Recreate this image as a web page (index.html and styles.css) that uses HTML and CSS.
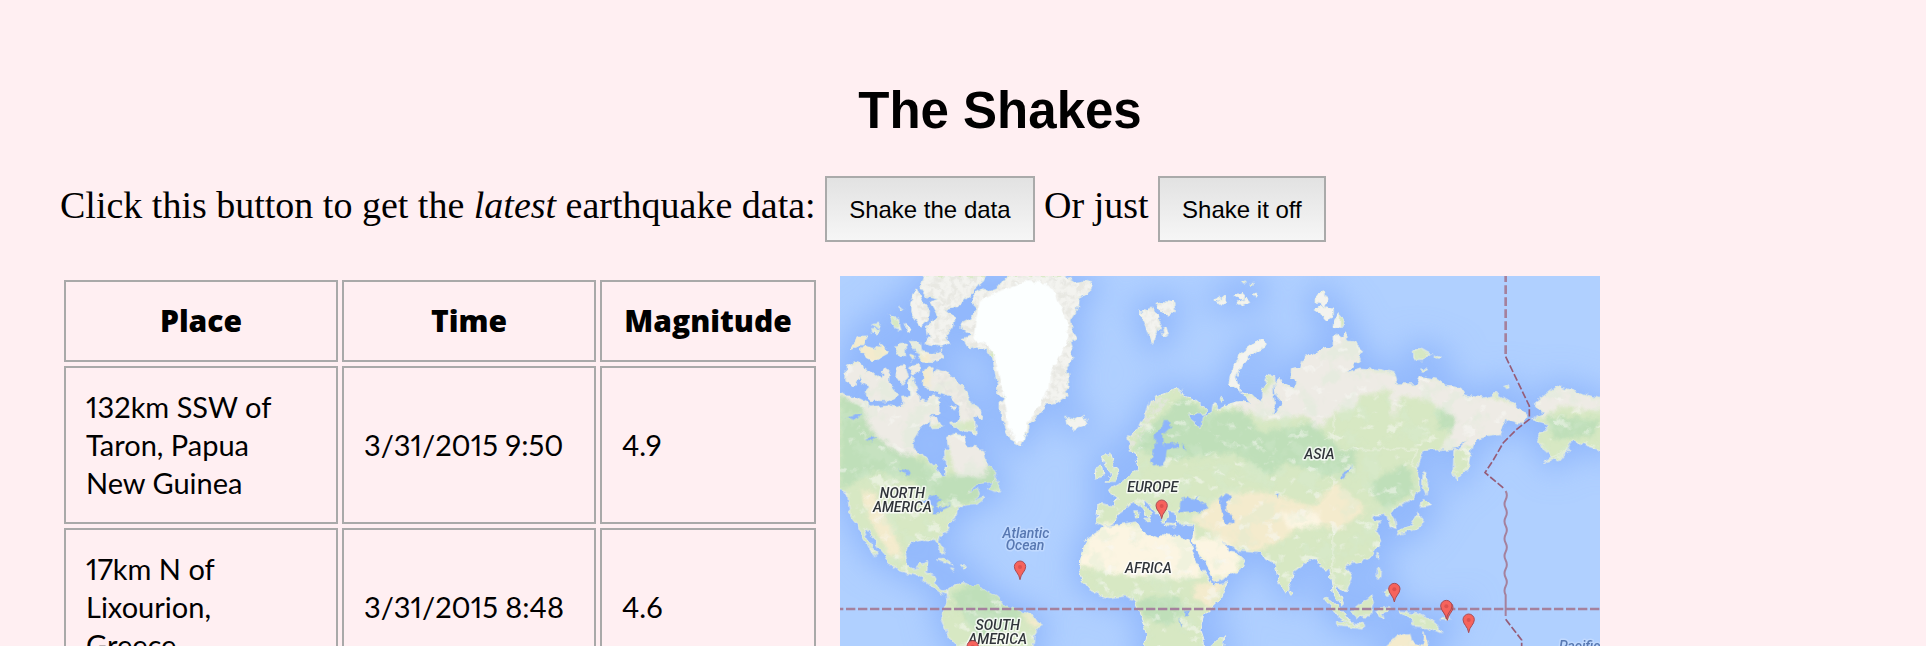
FILE: index.html
```html
<!DOCTYPE html>
<html lang="en">
<head>
<meta charset="utf-8">
<title>The Shakes</title>
<link rel="stylesheet" href="styles.css">
</head>
<body>
<h1 class="title">The Shakes</h1>
<p class="intro">Click this button to get the <em>latest</em> earthquake data: <button class="btn" type="button">Shake the data</button> Or just <button class="btn" type="button">Shake it off</button></p>
<main class="content">
<table class="quakes">
<thead>
<tr><th class="place" scope="col">Place</th><th class="time" scope="col">Time</th><th class="magnitude" scope="col">Magnitude</th></tr>
</thead>
<tbody>
<tr><td>132km SSW of Taron, Papua New Guinea</td><td>3/31/2015 9:50</td><td>4.9</td></tr>
<tr><td>17km N of Lixourion, Greece</td><td>3/31/2015 8:48</td><td>4.6</td></tr>
</tbody>
</table>
<svg class="map" viewBox="0 0 2280 1230" role="img" aria-label="World map of earthquakes">
<defs>
<filter id="coast" x="0" y="0" width="2280" height="1230" filterUnits="userSpaceOnUse">
<feTurbulence type="fractalNoise" baseFrequency="0.045" numOctaves="2" seed="4" result="n"/>
<feDisplacementMap in="SourceGraphic" in2="n" scale="22" xChannelSelector="R" yChannelSelector="G"/>
</filter>
<filter id="glow" x="-100" y="-100" width="2480" height="1430" filterUnits="userSpaceOnUse"><feGaussianBlur stdDeviation="44"/></filter>
<filter id="soft" x="-100" y="-100" width="2480" height="1430" filterUnits="userSpaceOnUse"><feGaussianBlur stdDeviation="7"/></filter>
<filter id="mottle" x="0" y="0" width="2280" height="1230" filterUnits="userSpaceOnUse">
<feTurbulence type="fractalNoise" baseFrequency="0.016" numOctaves="4" seed="9"/>
<feColorMatrix values="0 0 0 0 .67  0 0 0 0 .84  0 0 0 0 .65  6 0 0 0 -3.1"/>
</filter>
<filter id="ridges" x="0" y="0" width="2280" height="1230" filterUnits="userSpaceOnUse">
<feTurbulence type="fractalNoise" baseFrequency="0.022 0.03" numOctaves="4" seed="22"/>
<feColorMatrix values="0 0 0 0 .95  0 0 0 0 .95  0 0 0 0 .92  0 8 0 0 -5"/>
</filter>
<filter id="rocks" x="0" y="0" width="2280" height="1230" filterUnits="userSpaceOnUse">
<feTurbulence type="fractalNoise" baseFrequency="0.06" numOctaves="3" seed="2"/>
<feColorMatrix values="0 0 0 0 .78  0 0 0 0 .78  0 0 0 0 .74  5 0 0 0 -2.3"/>
</filter>
<clipPath id="rockArea"><path d="M210 0H780V380L650 440 560 530 500 510 480 360 400 350 410 450 290 320ZM880 60H1020V210H880ZM860 400 940 340 1010 340 960 400 900 500 850 540Z"/></clipPath>
<g id="land">
<g transform="translate(-30 -18)">
<path d="M10 355 45 378 75 380 115 400 115 412 170 405 200 412 218 403 235 395 240 375 235 340 247 320 262 355 265 390 290 398 305 375 327 380 326 430 302 430 300 450 268 478 248 510 250 545 262 600H10Z"/>
<path d="M345 600 360 545 350 502 375 492 400 500 412 530 435 530 457 550 460 600Z"/>
<path d="M270 50 285 8H470L445 52 400 90 382 115 352 120 374 152 368 172 345 198 356 220 330 232 285 220 300 200 292 165 325 140 300 95 330 88 292 80Z"/>
<path d="M240 95 260 58 276 90 298 122 295 150 272 172 240 130Z"/>
<path d="M425 98 436 70 462 55 475 66 500 58 520 30 540 8H690L735 38 760 34 786 40 780 66 745 85 740 120 722 150 726 185 742 206 718 215 732 260 710 290 717 350 700 370 712 376 682 396 648 402 620 438 594 460 590 492 575 528 545 512 530 480 514 440 514 400 527 385 504 374 503 345 498 318 490 270 470 240 440 230 418 236 400 206 428 196 390 175 396 158 430 140 440 112Z"/>
<path d="M178 138 205 148 213 180 196 176ZM225 158 245 178 235 185ZM128 165 150 160 145 172ZM126 180 145 178 143 194 128 192ZM65 235 85 200 108 198 98 224ZM90 240 105 228 130 235 148 238 150 222 162 235 175 248 150 262 130 275 112 265ZM195 228 225 222 226 260 212 258ZM238 215 270 215 275 245 310 252 330 240 342 262 325 275 275 272 262 250ZM240 250 252 255 248 270Z"/>
<path d="M50 285 80 275 112 300 90 320 70 348 48 330ZM95 312 120 303 152 330 165 290 180 310 178 340 204 378 170 392 120 390 103 372 120 352 92 338ZM202 292 225 290 234 320 216 342 198 320ZM240 290 268 285 268 305 248 316ZM218 382 238 380 236 400 222 402Z"/>
<path d="M280 345 282 300 302 290 312 320 320 293 345 300 377 338 402 358 418 378 425 400 458 425 456 450 430 438 442 492 402 482 356 458 395 450 388 412 360 375 320 365Z"/>
<path d="M303 443 320 445 338 474 300 476ZM358 405 372 405 370 420ZM210 108 220 115 214 122Z"/>
<path d="M708 442 735 450 755 436 771 450 765 468 735 480 712 462Z"/>
</g>
<g transform="translate(-30 540)">
<path d="M10-20H255L300 20 325 42 330 62 347 62 348 40 344-20H460L470 30 497 50 490 76 440 84 408 112 442 98 448 114 430 134 466 122 440 142 400 148 380 168 375 190 357 202 352 225 330 240 326 255 341 280 333 292 320 254 290 250 265 250 235 262 226 290 232 330 255 340 270 325 293 317 285 350 315 360 320 388 336 404 352 404 350 414 328 408 300 388 270 362 250 355 215 346 180 325 165 292 145 270 125 240 112 215 100 215 115 255 144 296 135 302 115 272 95 238 80 208 60 182 54 120 45 105 10 85Z"/>
<path d="M476 98 495 72 512 104 495 106ZM322 308 345 308 372 326 350 320ZM388 330 410 330 400 340ZM362 336 375 338 368 342Z"/>
<path d="M358 396 400 380 450 395 500 420 525 450 570 465 620 485 633 505 612 540 603 620 600 700H420L385 575 362 550 347 520 333 490 335 468 354 440 352 415Z"/>
</g>
<g transform="translate(720 -18)">
<path d="M143 500 180 470 205 420 215 390 250 370 300 355 305 375 345 388 377 415 375 432 325 430 345 465 366 470 372 440 396 430 400 398 412 420 440 403 480 395 512 400 480 362 520 378 547 398 550 350 563 315 581 320 582 380 586 402 576 432 607 410 602 390 591 378 586 340 600 325 612 345 642 355 648 338 633 320 635 298 665 295 675 260 720 240 770 218 800 190V610H190L188 535 152 545Z"/>
<path d="M545 211 558 218 545 237 510 252 486 285 470 320 478 358 447 345 453 310 465 285 480 252 510 228Z"/>
<path d="M180 125 203 128 217 110 232 145 243 156 228 195 217 220 205 190 196 165ZM228 100 245 95 280 98 285 120 262 138 245 125ZM246 175 258 172 264 195 250 196Z"/>
<path d="M412 96 435 76 440 90 422 106ZM465 78 488 70 486 88ZM475 98 500 85 510 96 485 104ZM520 70 533 66 530 82ZM406 84H414V92H406ZM486 36H494V42H486ZM514 40H522V46H514Z"/>
<path d="M712 75 730 62 743 85 735 106 712 100ZM703 120 725 108 757 115 757 140 735 152 720 130ZM763 155 778 132 792 150 782 175 760 172ZM424 382 434 388 426 395Z"/>
</g>
<g transform="translate(1500 -18)">
<path d="M-20 190 20 212 45 218 67 240 60 265 15 310 60 295 130 300 165 310 172 345 230 345 240 320 290 328 320 350 360 353 372 375 430 385 470 373 520 400 562 440 540 460 500 445 482 490 420 500 395 525 382 600H345L358 535 390 500 340 535 250 542 228 600H-20Z"/>
<path d="M220 240 245 235 272 250 250 268 222 268ZM280 255 302 262 292 268ZM242 294 260 298 250 304ZM488 350 508 342 510 350 496 356Z"/>
<path d="M585 400 650 348 720 370 800 392V545L700 513 680 540 652 575 612 542 590 490 625 482 618 460 578 446 610 432Z"/>
</g>
<g transform="translate(720 540)">
<path d="M165-20 167 5 178 30 175 42 148 62 108 90 85 103 112 125 105 150 54 143 50 200 72 210 105 200 130 157 165 140 190 160 205 190 219 172 195 150 190 132 205 140 235 175 255 200 267 165 285 170 290 205 342 205 335 255 352 285 387 345 402 377 480 342 494 312 470 290 447 285 428 255 480 285 545 290 557 310 575 315 585 330 600 385 615 408 630 385 637 350 682 315 705 310 725 330 750 345 760 415 785 450 790 440 765 390 800 400V-20Z"/>
<path d="M20 250 60 225 75 212 170 198 180 225 235 250 250 235 310 245 328 255 345 310 385 370 397 387 442 380 420 430 370 480 360 520 373 560 370 700H200L190 590 200 540 185 490 165 435 135 420 75 425 30 400 6 370 0 350 2 310Z"/>
<path d="M385 620 388 575 410 555 434 542 425 620Z"/>
<path d="M70 5 90-12 102 30 118 60 110 76 78 76 95 55 77 30ZM46 40 65 24 72 55 48 70ZM192 190 212 190 205 200ZM162 165 174 165 172 182 163 182ZM626 400 640 410 634 420ZM258 204 285 206 282 212 262 210Z"/>
<path d="M730 425 752 432 800 480 812 505 780 485Z"/>
</g>
<g transform="translate(1500 540)">
<path d="M-20-20H235L215 20 235 50 242 98 215 130 180 150 150 168 165 190 168 220 150 212 145 185 135 175 100 178 100 195 125 195 105 222 122 250 115 270 80 310 40 320 20 330 36 360 20 400-20 380Z"/>
<path d="M342-20H385V10L375 40 348 70 340 45ZM250 44 263 80 258 118 248 85ZM250 130 272 148 243 154ZM235 168 250 185 242 215 190 234 172 240 178 225 215 205ZM112 340 124 340 122 365 112 370ZM130 402 150 395 148 418 134 415ZM108 292 116 298 112 310Z"/>
<path d="M38 465 60 445 95 415 100 440 87 482 50 482ZM110 462 130 452 152 458 125 468 132 490 116 485ZM178 465 215 470 250 480 290 505 302 530 260 512 220 510 212 490ZM125 620 135 570 160 548 210 535 215 560 247 572 252 530 265 560 278 620ZM-10 495 70 505 70 516-10 505ZM610 20 640 0 690-20 650 6ZM300 494 330 482 320 495Z"/>
</g>
</g>
<mask id="landMask" maskUnits="userSpaceOnUse" x="-50" y="-50" width="2400" height="1350"><use href="#land" fill="#fff"/></mask>
<g id="pin"><path d="M0 0C-2-18-17-25-17-39A17 17 0 0 1 17-39C17-25 2-18 0 0Z" fill="#f6635c" stroke="#a84b55" stroke-width="3"/><circle cy="-38" r="6" fill="#de514e"/></g>
</defs>
<rect class="sea" width="2280" height="1230"/>
<use href="#land" class="shelf" filter="url(#glow)"/>
<g filter="url(#coast)">
<use href="#land" fill="#d7e8c3" stroke="#edf1e3" stroke-width="3"/>
<g mask="url(#landMask)">
<g filter="url(#soft)">
<path class="forest" d="M0 340 80 390 130 470 220 540 330 600 460 560 480 630 410 680 290 690 220 610 100 590 0 640ZM330 960 420 900 560 1000 520 1060 420 1090ZM900 480 1030 360 1100 410 1210 400 1260 470 1420 440 1500 520 1440 590 1340 560 1290 600 1180 530 1000 550 880 520ZM1420 530 1550 520 1540 590 1440 600ZM890 970 1010 960 1040 1010 980 1050 910 1020ZM1590 620 1700 560 1730 640 1640 700 1600 660ZM1790 400 1850 400 1870 470 1800 460ZM2120 420 2280 430 2260 480 2140 490Z"/>
<path class="tundra" d="M0 150 350 200 440 430 260 450 230 540 170 530 90 460 70 390 0 360ZM310 470H440V600H350ZM1160 380 1280 350 1350 200 1560 160 1580 280 1720 290 2080 400 2040 500 1900 510 1800 530 1850 430 1760 370 1680 360 1660 440 1650 340 1560 360 1540 400 1500 400 1430 460 1400 420 1270 430ZM2080 370 2160 320 2290 370V410L2160 390 2110 430Z"/>
<path class="arid" d="M30 180H170V260H30ZM200 230H270V330H240V260H200ZM60 640 100 650 160 760 190 850 150 840 90 730ZM1160 650 1280 650 1420 690 1490 620 1580 700 1500 760 1400 740 1330 790 1240 830 1160 800 1050 730ZM1060 930 1160 910 1120 1000 1060 960ZM540 1010 610 1030 590 1060ZM1630 1070H1780V1200H1630Z"/>
<path class="desert" d="M700 860 750 770 800 740 1060 760 1090 900 1000 910 800 890ZM1060 790 1140 780 1210 840 1180 900 1110 910ZM1320 710 1440 710 1440 750 1350 760Z"/>
</g>
<rect width="2280" height="1230" filter="url(#mottle)" opacity=".3"/>
<rect width="2280" height="1230" filter="url(#ridges)" opacity=".5"/>
<path fill="#f3f3ef" d="M200 0H800V520H460V220H300L200 160ZM870 50H1500V200H1290L1220 350H1140V220H870ZM660 400H760V480H660Z"/>
<g clip-path="url(#rockArea)"><rect width="2280" height="1230" filter="url(#rocks)" opacity=".8"/></g>
<path fill="#fcffff" d="M420 70 480 45 550 15 620 20 650 60 670 110 685 150 680 200 655 250 630 290 625 340 595 400 560 440 555 490 530 500 505 450 500 400 480 320 465 240 440 205 400 190 410 120Z"/>
</g>
<g class="inland">
<path d="M970 432 992 432 990 455 970 475 971 507 1015 501 1016 513 980 522 976 552 967 565 940 572 930 555 946 510 944 475 962 455Z"/>
<path d="M1018 698 1025 665 1045 660 1060 675 1082 652 1072 670 1098 690 1096 704 1060 706 1015 708ZM1136 670 1155 652 1176 660 1160 680 1162 705 1181 720 1180 742 1150 738 1145 705ZM235 675 280 660 310 672 290 682 298 712 280 712 278 684ZM285 704 330 686 330 692 290 710ZM175 580 210 582 200 600ZM20 425 65 410 45 432ZM75 488 110 480 95 495ZM1036 1002 1050 1000 1046 1018 1034 1015ZM1018 1025 1028 1048 1024 1055ZM1500 605 1535 570 1530 585 1508 610ZM1310 655 1320 652 1315 668ZM1030 500 1042 525 1028 515Z"/>
</g>
</g>
<g class="borders">
<path stroke-dasharray="28 8" d="M-18 999H2280"/>
<path stroke-dasharray="26 10" d="M1997-8V242"/>
<path class="thin" d="M1997 242 2068 390V430L2030 460 1990 500 1960 552 1935 590 1995 640"/>
<path class="wave" d="M1997 645q7 13 0 26t0 26t0 26t0 26t0 26t0 26t0 26t0 26t0 26t0 26t0 26t0 26V1020"/>
<path class="thin" d="M1997 1030 2045 1092V1230"/>
</g>
<g class="labels">
<text x="187" y="667">NORTH</text><text x="187" y="708">AMERICA</text>
<text x="473" y="1063">SOUTH</text><text x="473" y="1105">AMERICA</text>
<text x="938" y="649">EUROPE</text><text x="925" y="890">AFRICA</text><text x="1438" y="549">ASIA</text>
<g class="ocean"><text x="558" y="786">Atlantic</text><text x="555" y="822">Ocean</text><text x="2219" y="1126">Pacific</text></g>
</g>
<use href="#pin" x="540" y="911"/><use href="#pin" x="965" y="728"/><use href="#pin" x="1663" y="978"/><use href="#pin" x="1822" y="1033"/><use href="#pin" x="1819" y="1029"/><use href="#pin" x="1886" y="1070"/><use href="#pin" x="398" y="1150"/>
</svg>
</main>
</body>
</html>
```
FILE: styles.css
```css
* { box-sizing: border-box; }

body {
  margin: 0;
  padding: 81px 0 0 60px;
  background: #ffeff2;
  color: #000;
}

.title {
  margin: 0;
  padding-left: 14px;
  font: bold 51px/60px "Liberation Sans", Arial, sans-serif;
  text-align: center;
}

.intro {
  margin: 35px 0 34px;
  font: 38px/40px Georgia, "Liberation Serif", serif;
}

.btn {
  height: 66px;
  padding: 2px 22px 0;
  border: 2px solid #aaa;
  border-radius: 0;
  background: linear-gradient(#e2e2e2, #f6f6f6);
  color: #000;
  font: 24px/28px "Liberation Sans", Arial, sans-serif;
}

.content {
  display: flex;
  align-items: flex-start;
  gap: 20px;
}

.quakes {
  flex: 0 1 760px;
  table-layout: fixed;
  border-collapse: separate;
  border-spacing: 4px;
  font: 29px/38px "Gill Sans", Lato, sans-serif;
  font-variant-numeric: proportional-nums;
}

.quakes th,
.quakes td {
  padding: 20px;
  border: 2px solid #a9a9a9;
  text-align: left;
}

.quakes td:first-child { padding-right: 40px; }

.quakes th {
  font: 800 30px/38px "Open Sans", sans-serif;
  text-align: center;
}

.place { width: 274px; }
.time { width: 254px; }
.magnitude { width: 216px; }

.map {
  flex: 0 1 760px;
  min-width: 0;
}

.sea { fill: #b0d0ff; }

.shelf {
  fill: #92b8fc;
  stroke: #92b8fc;
  stroke-width: 50px;
}

.forest { fill: #bfdfb9; }
.tundra { fill: #eeebe5; }
.arid { fill: #f4ebcd; }
.desert { fill: #fcf5e2; }
.inland { fill: #8eb5fb; }

.borders {
  fill: none;
  stroke: #a5819d;
  stroke-width: 8px;
}

.thin {
  stroke: #965c77;
  stroke-width: 5px;
  stroke-dasharray: 22px 7px;
}

.wave { stroke-width: 6px; }

.labels {
  fill: #30343a;
  stroke: #fff;
  stroke-opacity: .75;
  stroke-width: 9px;
  stroke-linejoin: round;
  paint-order: stroke;
  font: italic 500 42px Roboto, sans-serif;
  text-anchor: middle;
}

.ocean {
  fill: #5878b2;
  stroke: #c5dcff;
}
```
